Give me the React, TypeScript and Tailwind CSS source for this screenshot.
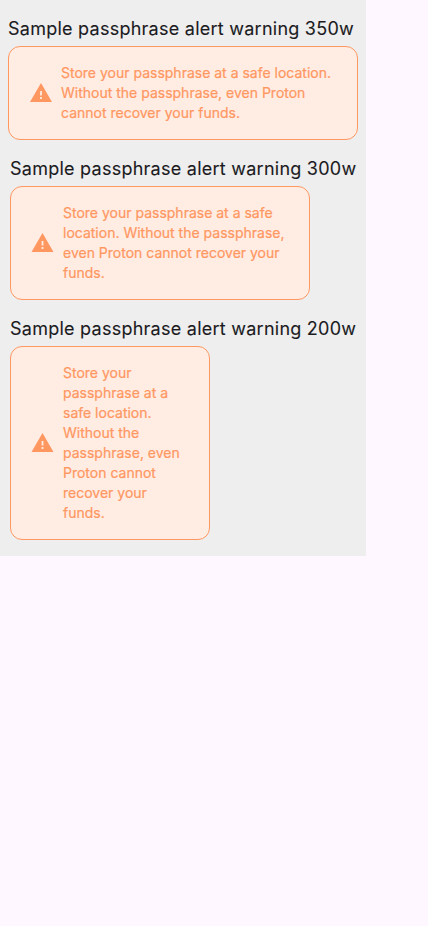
const text = 'Store your passphrase at a safe location. Without the passphrase, even Proton cannot recover your funds.';

function Alert({ title, width, offset, iconBox }: { title: string; width: string; offset: string; iconBox: string }) {
  return (
    <section className={`mb-4 flex flex-col ${offset}`}>
      <h2 className="mt-px h-[23px] text-[18px] leading-6 tracking-[0.25px] whitespace-nowrap text-[#1b1b1f] [-webkit-text-stroke:0.1px]">{title}</h2>
      <div className={`${width} mt-[6px] flex items-center rounded-xl border border-[#ff9761] bg-[#ffece3] py-4 pr-6 pl-5`}>
        <svg className="mr-2 h-6 w-6 shrink-0" viewBox={iconBox} fill="#ff9761">
          <path d="M1 21h22L12 2 1 21zm11.9-3h-1.8v-2h1.8v2zm0-3.6h-1.8v-4.4h1.8v4.4z" />
        </svg>
        <p className="text-[14px] leading-5 text-[#ff9761] [-webkit-text-stroke:0.2px]">{text}</p>
      </div>
    </section>
  );
}

export default function App() {
  return (
    <main className="min-h-screen bg-[#fef7ff] font-['Inter',sans-serif]">
      <div className="h-[556px] w-[366px] bg-[#eeeeee] pt-4">
        <Alert title="Sample passphrase alert warning 350w" width="w-[350px]" offset="pl-2" iconBox="0 0 24 24" />
        <Alert title="Sample passphrase alert warning 300w" width="w-[300px]" offset="pl-[10px]" iconBox="0.5 0 24 24" />
        <Alert title="Sample passphrase alert warning 200w" width="w-[200px]" offset="pl-[10px]" iconBox="0.5 0 24 24" />
      </div>
    </main>
  );
}
